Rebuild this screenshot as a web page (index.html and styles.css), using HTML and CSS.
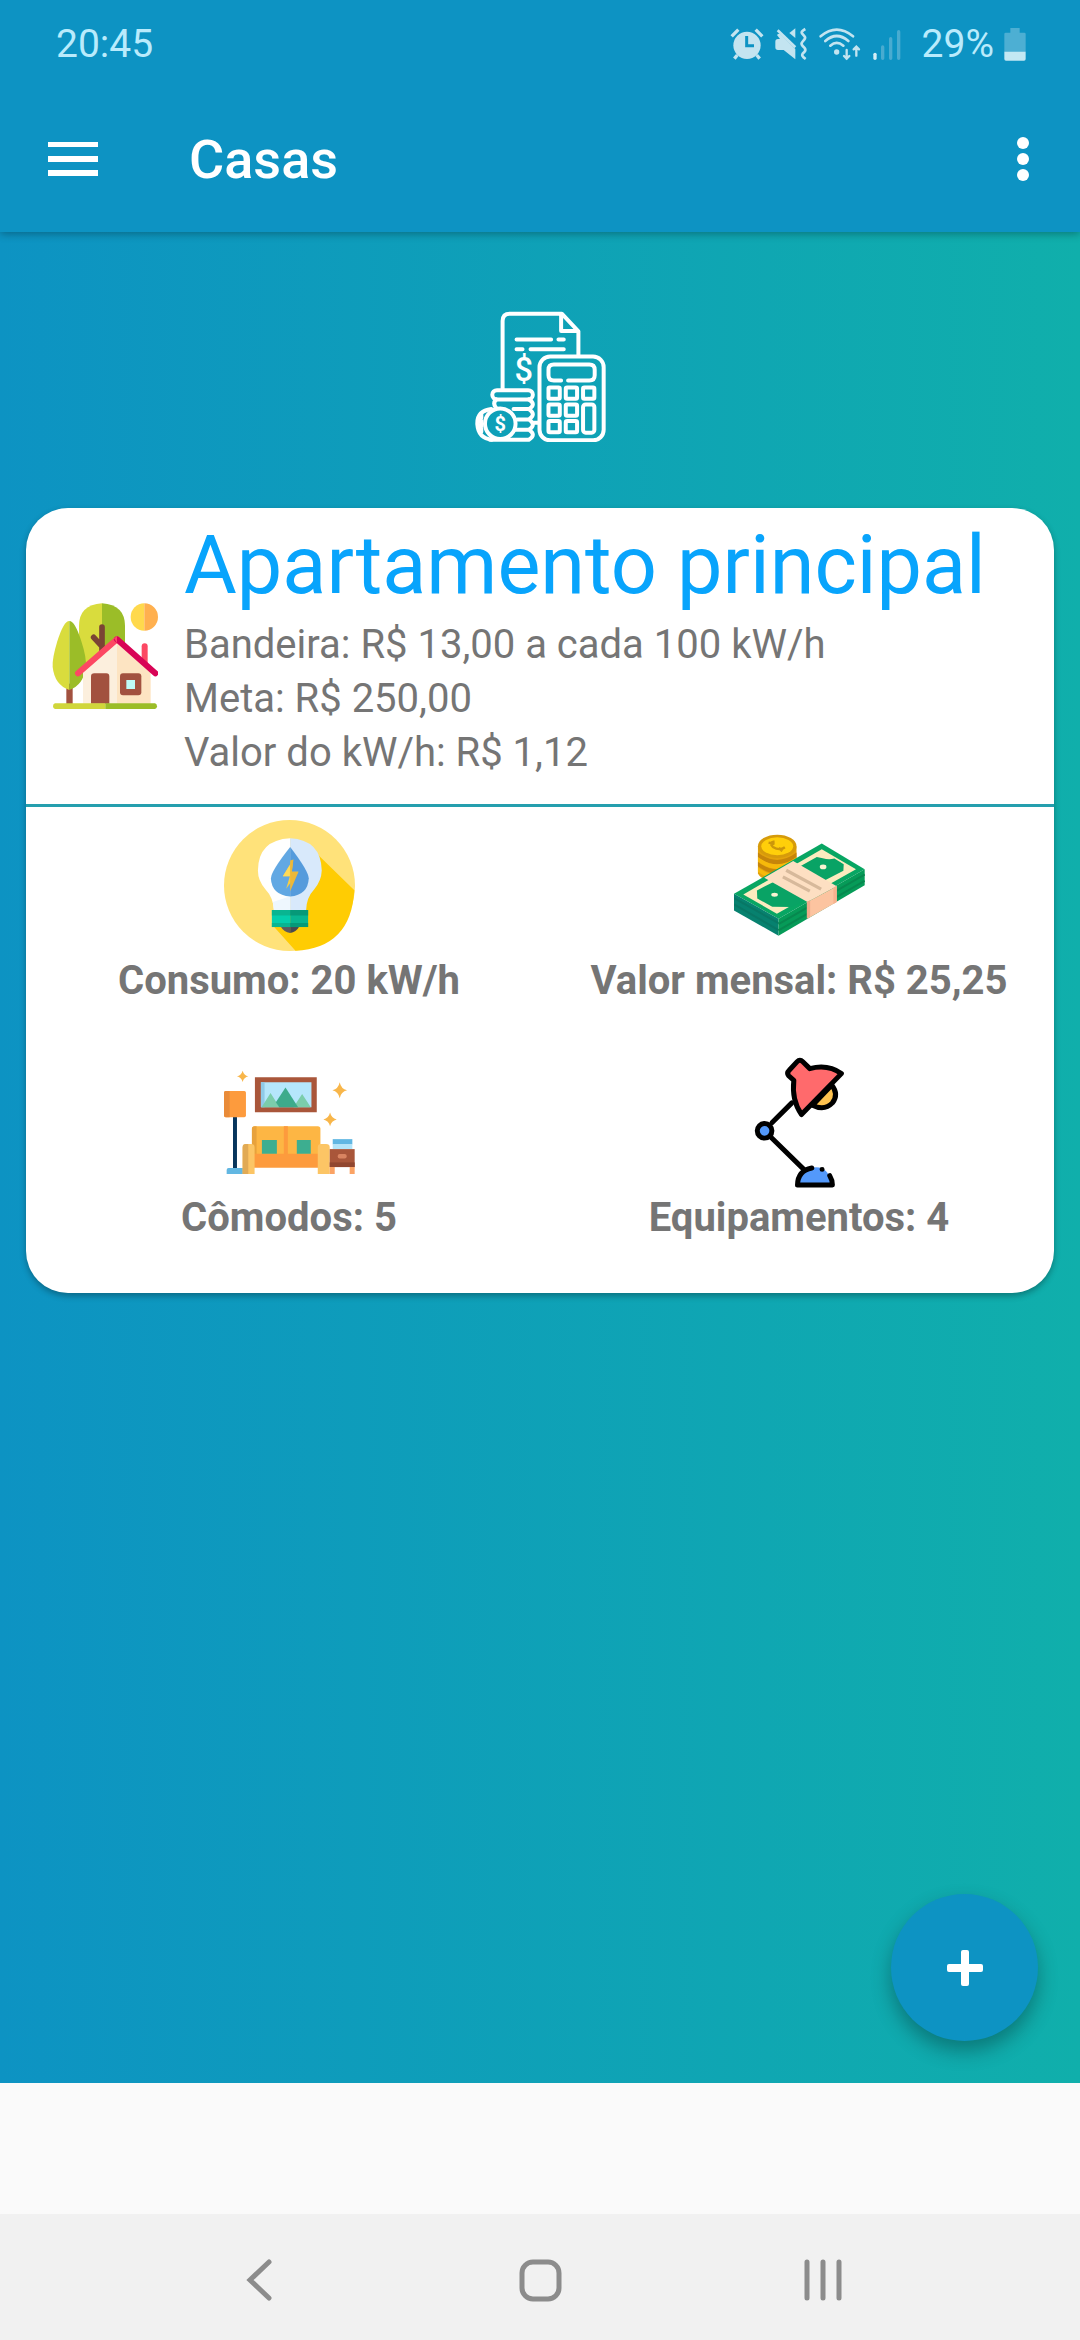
FILE: index.html
```html
<!DOCTYPE html>
<html lang="pt-BR">
<head>
    <meta charset="UTF-8">
    <meta name="viewport" content="width=device-width, initial-scale=1.0">
    <title>Casas</title>
    <link rel="stylesheet" href="styles.css">
</head>
<body>
    <header class="top">
        <div class="status-bar">
            <span class="clock">20:45</span>
            <div class="status-icons">
                <!-- Alarm -->
                <svg width="34" height="34" viewBox="84 76 102 102" aria-hidden="true">
                    <g fill="none" stroke="#c3e4f0" stroke-width="10">
                        <path d="M89 104l20-20M161 84l20 20"/>
                        <path d="M106 160l-9 11M164 160l9 11"/>
                    </g>
                    <circle cx="135" cy="131" r="41" fill="#c3e4f0"/>
                    <path d="M134 103v29h22" fill="none" stroke="#0d93c3" stroke-width="9"/>
                </svg>
                <!-- Sound off, vibrate -->
                <svg width="34" height="34" viewBox="218 76 102 102" aria-hidden="true">
                    <path d="M222 120q0-8 8-8h6l-9-12q6-8 13 0l42 42v31l-35-28h-17q-8 0-8-8z" fill="#c3e4f0"/>
                    <path d="M282 80v29l-18-15z" fill="#c3e4f0"/>
                    <path d="M229 86l53 51" stroke="#c3e4f0" stroke-width="8" fill="none"/>
                    <path d="M312 82q-14 8-10 13l7 8q5 6-1 12l-5 6q-5 6 1 12l5 5q6 7 0 13l-5 5q-5 7 9 16" fill="none" stroke="#c3e4f0" stroke-width="8"/>
                </svg>
                <!-- Wifi -->
                <svg width="44" height="34" viewBox="350 76 132 102" aria-hidden="true">
                    <g fill="none" stroke="#c3e4f0" stroke-width="8" stroke-linecap="round">
                        <path d="M358 104q48-40 97 0M372 118q34-30 69 0M387 132q19-17 39 0"/>
                        <path d="M436 145v26M428 163l8 8 8-8M465 162v-26M457 143l8-8 8 8" stroke-width="7"/>
                    </g>
                    <circle cx="406" cy="151" r="8" fill="#c3e4f0"/>
                </svg>
                <!-- Signal -->
                <svg width="30" height="34" viewBox="509 76 90 102" aria-hidden="true">
                    <g stroke="#49abd0" stroke-width="10" stroke-linecap="round">
                        <path d="M541 136v34M565 111v59M589 90v80"/>
                        <path d="M518 158v12" stroke="#d5eef6"/>
                    </g>
                </svg>
                <span class="battery-level">29%</span>
                <svg width="22" height="34" viewBox="911 76 66 102" aria-hidden="true">
                    <path d="M930 79h28v14h14q4 0 4 4v54h-64V97q0-4 4-4h14z" fill="#4dafd3"/>
                    <path d="M912 150h64v22q0 5-5 5h-54q-5 0-5-5z" fill="#c3e8f3"/>
                </svg>
            </div>
        </div>
        <div class="app-bar">
            <button class="icon-btn" type="button" aria-label="Abrir menu">
                <svg width="50" height="34" viewBox="0 0 50 34" fill="#fff" aria-hidden="true">
                    <path d="M0 0h50v5H0zM0 14h50v6H0zM0 28h50v6H0z"/>
                </svg>
            </button>
            <h1>Casas</h1>
            <button class="icon-btn" type="button" aria-label="Mais opções">
                <svg width="12" height="44" viewBox="0 0 12 44" fill="#fff" aria-hidden="true">
                    <circle cx="6" cy="6" r="6"/>
                    <circle cx="6" cy="22" r="6"/>
                    <circle cx="6" cy="38" r="6"/>
                </svg>
            </button>
        </div>
    </header>

    <main class="content">
        <!-- Bill and calculator -->
        <svg class="logo" viewBox="43 46 394 394" aria-hidden="true">
            <g fill="none" stroke="#fff" stroke-width="12" stroke-linecap="round" stroke-linejoin="round">
                <path d="M126 281V76q0-22 22-22h156l50 53v71M302 56v50h50"/>
                <path d="M168 132h104M294 132h16M168 161h18M210 161h100"/>
                <rect x="237" y="183" width="193" height="252" rx="32"/>
                <path d="M302 255h-22q-16 0-16-16v-16q0-16 16-16h107q16 0 16 16v16q0 16-16 16h-64"/>
                <rect x="264" y="276" width="34" height="34" rx="4"/>
                <rect x="316" y="276" width="34" height="34" rx="4"/>
                <rect x="368" y="276" width="34" height="34" rx="4"/>
                <rect x="264" y="327" width="34" height="34" rx="4"/>
                <rect x="316" y="327" width="34" height="34" rx="4"/>
                <rect x="264" y="377" width="34" height="34" rx="4"/>
                <rect x="316" y="377" width="34" height="34" rx="4"/>
                <rect x="368" y="327" width="34" height="85" rx="8"/>
                <rect x="95" y="284" width="122" height="28" rx="14"/>
                <path d="M107 312q-12 11-1 25M205 312q24 14 0 29h-46M205 341q24 16 0 31h-34M205 372q24 16 0 31h-42M205 403q24 16 0 30H88M220 382h14"/>
                <circle cx="119" cy="385" r="46"/>
                <path d="M92 341q-44 6-42 46 3 42 44 46M62 357v10M62 376v16M62 400v10"/>
            </g>
            <g class="money-sign" fill="#fff">
                <text x="190" y="258" font-size="98" font-weight="500">$</text>
                <text x="119" y="407" font-size="60" font-weight="700">$</text>
            </g>
        </svg>

        <article class="card">
            <div class="card-header">
                <!-- House -->
                <svg class="house" viewBox="36 38 318 318" aria-hidden="true">
                    <path d="M186 39q-69 5-69 68v130h69z" fill="#d9dc3d"/>
                    <path d="M186 39q69 5 69 68v130h-69z" fill="#9bbd28"/>
                    <path d="M186 110v80M186 168l-25-27" stroke="#7a4434" stroke-width="17" stroke-linecap="round" fill="none"/>
                    <path d="M79 280h19v62H79z" fill="#a2513f"/>
                    <path d="M88 92q-17 0-36 61-16 52-14 77 6 54 50 69z" fill="#d9dc3d"/>
                    <path d="M88 92q17 0 36 61 17 52 13 77-6 54-49 69z" fill="#9bbd28"/>
                    <path d="M313 39a41 41 0 0 0 0 82z" fill="#ffd94d"/>
                    <path d="M313 39a41 41 0 0 1 0 82z" fill="#ffb04f"/>
                    <path d="M314 168v54" stroke="#fc4863" stroke-width="18" stroke-linecap="round"/>
                    <path d="M129 245L231 153v187H129z" fill="#fcefdd"/>
                    <path d="M231 153l101 92v95H231z" fill="#fde4c2"/>
                    <path d="M114 249l117-102" stroke="#fc4863" stroke-width="18" stroke-linecap="round"/>
                    <path d="M346 249L231 147" stroke="#d80456" stroke-width="18" stroke-linecap="round"/>
                    <path d="M222 144l9-7v21z" fill="#fc4863"/>
                    <path d="M153 340v-81q0-10 10-10h36q9 0 9 10v81z" fill="#a2513f"/>
                    <rect x="240" y="249" width="64" height="66" rx="9" fill="#a2513f"/>
                    <path d="M259 269h26v27h-26z" fill="#befaf6"/>
                    <path d="M196 339H45a9 9 0 0 0 0 17h151z" fill="#d0d63b"/>
                    <path d="M196 339h149a9 9 0 0 1 0 17H196z" fill="#9bbd28"/>
                </svg>
                <div class="card-info">
                    <h2>Apartamento principal</h2>
                    <p>Bandeira: R$ 13,00 a cada 100 kW/h</p>
                    <p>Meta: R$ 250,00</p>
                    <p>Valor do kW/h: R$ 1,12</p>
                </div>
            </div>
            <div class="stats">
                <div class="stat">
                    <!-- Light bulb -->
                    <svg viewBox="39 29 394 394" aria-hidden="true">
                        <circle cx="236" cy="226" r="197" fill="#ffe27a"/>
                        <path d="M320 132l111 108q-10 174-177 182l-64-71 80-60z" fill="#ffcc03"/>
                        <path d="M238 84q-96 5-97 97 0 31 23 57 23 24 25 62h49z" fill="#fff"/>
                        <path d="M238 84q93 5 95 97-1 31-23 57-23 24-24 62h-48z" fill="#d8e9fb"/>
                        <path d="M186 276l3 24h49v-42z" fill="#eef7fe"/>
                        <path d="M238 110q-58 73-58 95 3 50 58 54z" fill="#62a8e3"/>
                        <path d="M238 110q56 73 56 95-3 50-56 54z" fill="#559bdc"/>
                        <path d="M247 148l-31 50h21l-11 38 37-51h-20z" fill="#facd42"/>
                        <path d="M238 151v92l25-58h-20l5-37z" fill="#edb838"/>
                        <path d="M247 148l-31 50h21v-34z" fill="#ffda57"/>
                        <path d="M210 350h28v19q-19-3-28-19z" fill="#5d5b5e"/>
                        <path d="M238 350h27q-9 16-27 19z" fill="#484950"/>
                        <path d="M183 300h55v51h-55z" fill="#04cfac"/>
                        <path d="M238 300h54v51h-54z" fill="#09b590"/>
                        <path d="M183 300h55v16h-55zM183 339h55v12h-55z" fill="#09b591"/>
                        <path d="M238 300h54v16h-54zM238 339h54v12h-54z" fill="#079978"/>
                    </svg>
                    <p>Consumo: 20 kW/h</p>
                </div>
                <div class="stat">
                    <!-- Banknotes and coins -->
                    <svg viewBox="39 0 394 394" aria-hidden="true">
                        <path d="M111 80v80q8 22 58 24 50-3 58-24V80z" fill="#e3a20c"/>
                        <path d="M111 98q58 44 116 0v14q-58 44-116 0zM111 126q58 44 116 0v13q-58 44-116 0z" fill="#c6850a"/>
                        <path d="M111 111q58 44 116 0v14q-58 44-116 0zM111 142q58 44 116 0v14q-58 44-116 0z" fill="#f6b90b"/>
                        <ellipse cx="169" cy="79" rx="58" ry="35" fill="#d69b0b"/>
                        <ellipse cx="169" cy="79" rx="48" ry="27" fill="#ffcf0a"/>
                        <path d="M161 64q-19 3-5 17 20 13 36 1M143 68l18 4M174 84l10 10" fill="none" stroke="#cb960b" stroke-width="7"/>
                        <path d="M39 222L303 71l129 77-259 149z" fill="#08a663"/>
                        <path d="M39 222l134 75v51L39 272z" fill="#07816f"/>
                        <path d="M39 235l134 75M39 254l134 77" stroke="#087765" stroke-width="6"/>
                        <path d="M173 297l259-149v48L173 348z" fill="#069b58"/>
                        <path d="M173 313l259-149M173 332l259-149" stroke="#07884f" stroke-width="6"/>
                        <path d="M67 224L303 88l103 60-238 134z" fill="#fbebbf"/>
                        <path d="M108 212l54-28 94 55-44 23-58-1-45-25z" fill="#09a365"/>
                        <path d="M237 140l51-29 18 4q18 6 35 1l28 17-1 20-64 33-75-38z" fill="#09a365"/>
                        <ellipse cx="161" cy="225" rx="10" ry="6" fill="#f9f3d2"/>
                        <ellipse cx="307" cy="141" rx="10" ry="7" fill="#f9f3d2"/>
                        <path d="M130 174l87-51 131 76-88 48z" fill="#fddfc2"/>
                        <path d="M260 247l88-48v48l-88 50z" fill="#fcc4a0"/>
                        <path d="M258 246l10-5v49l-10 7z" fill="#f1aa8a"/>
                        <path d="M338 204l10-6v49l-10 6z" fill="#f7b28f"/>
                        <path d="M196 151l105 57M186 171l81 43" stroke="#d7b99b" stroke-width="10"/>
                    </svg>
                    <p>Valor mensal: R$ 25,25</p>
                </div>
                <div class="stat">
                    <!-- Living room -->
                    <svg viewBox="39 20 394 394" aria-hidden="true">
                        <path d="M66 198h12v160H66z" fill="#07355c"/>
                        <rect x="39" y="122" width="66" height="79" rx="5" fill="#fd9b3d"/>
                        <path d="M44 122h12v79H44q-5 0-5-5v-69q0-5 5-5z" fill="#e98b39"/>
                        <path d="M47 372v-12q0-6 6-6h50v18z" fill="#62b7e2"/>
                        <path d="M132 81h186v105H132z" fill="#a9563a"/>
                        <path d="M150 96h152v75H150z" fill="#b5e6fb"/>
                        <path d="M150 96h11v75h-11z" fill="#8fcae8"/>
                        <path d="M152 171l27-43 27 43zM248 171l26-40 26 40z" fill="#7bcdab"/>
                        <path d="M195 156l29-44 38 59h-57z" fill="#3dab8b"/>
                        <g fill="#f8b64a">
                            <path d="M95 61q4 14 17 17-13 3-17 17-4-14-17-17 13-3 17-17z"/>
                            <path d="M387 96q4 20 22 24-18 4-22 24-4-20-22-24 18-4 22-24z"/>
                            <path d="M358 187q4 17 20 21-16 4-20 20-4-16-20-20 16-4 20-21z"/>
                        </g>
                        <rect x="123" y="228" width="206" height="100" rx="8" fill="#fdb644"/>
                        <path d="M131 228h6v84h-14v-76q0-8 8-8z" fill="#e8a23c"/>
                        <path d="M219 228h12v84h-12z" fill="#fd9b3d"/>
                        <path d="M123 311h208v42H123z" fill="#fd9b3d"/>
                        <path d="M153 270h45v41h-45zM258 270h42v41h-42z" fill="#3dae90"/>
                        <path d="M95 372v-80q0-10 10-10h15q11 0 11 10v80zM321 372v-80q0-10 10-10h15q11 0 11 10v80z" fill="#fcc565"/>
                        <path d="M95 372v-80q0-10 10-10h7v90z" fill="#e1aa55"/>
                        <path d="M366 267h59v16h-59z" fill="#61b7e3"/>
                        <path d="M366 283h59v14h-59z" fill="#b3e5fa"/>
                        <path d="M357 297h75v54h-75z" fill="#a9563a"/>
                        <path d="M357 337h75v14h-75z" fill="#91462f"/>
                        <rect x="381" y="312" width="27" height="13" rx="6" fill="#d98461"/>
                        <path d="M357 351h15v21h-15zM417 351h15v21h-15z" fill="#fba365"/>
                    </svg>
                    <p>Cômodos: 5</p>
                </div>
                <div class="stat">
                    <!-- Desk lamp -->
                    <svg viewBox="-20 20 394 394" aria-hidden="true">
                        <g stroke="#000" stroke-width="15" stroke-linecap="round" stroke-linejoin="round" fill="none">
                            <path d="M154 158l-60 60M92 262l98 96"/>
                            <path d="M274 104q22 28 2 54-24 25-60 7z" fill="#ffc34f"/>
                            <path d="M183 193q-30-43-23-103l-16-14q-6-8 2-16l24-26q8-9 17 0l21 21q55-14 95 15z" fill="#ff6a6c"/>
                            <circle cx="72" cy="242" r="22" fill="#5399fb"/>
                            <path d="M171 405q2-40 38-51 54-14 67 51z" fill="#5399fb" stroke="none"/>
                            <path d="M214 354q-42 8-43 51h105q0-15-8-28M245 358h0"/>
                        </g>
                    </svg>
                    <p>Equipamentos: 4</p>
                </div>
            </div>
        </article>

        <button class="fab" type="button" aria-label="Adicionar casa">
            <svg width="36" height="36" viewBox="0 0 36 36" fill="#fff" aria-hidden="true">
                <rect x="14" y="0" width="8" height="36" rx="2"/>
                <rect x="0" y="14" width="36" height="8" rx="2"/>
            </svg>
        </button>
    </main>

    <div class="footer-space"></div>

    <nav class="nav-bar" aria-label="Sistema">
        <button class="icon-btn" type="button" aria-label="Voltar">
            <svg width="48" height="48" viewBox="0 0 48 48" aria-hidden="true">
                <path d="M35 6L16 24l19 18"/>
            </svg>
        </button>
        <button class="icon-btn" type="button" aria-label="Início">
            <svg width="48" height="48" viewBox="0 0 48 48" aria-hidden="true">
                <rect x="6" y="6" width="37" height="37" rx="11"/>
            </svg>
        </button>
        <button class="icon-btn" type="button" aria-label="Recentes">
            <svg width="48" height="48" viewBox="0 0 48 48" aria-hidden="true">
                <path d="M9 6v36M25 6v36M41 6v36"/>
            </svg>
        </button>
    </nav>
</body>
</html>
```
FILE: styles.css
```css
:root {
    --primary: #0d93c3;
    --secondary: #10afab;
    --title: #08a4fc;
    --text: #757575;
    --status: #b9ebfc;
}

* {
    margin: 0;
    padding: 0;
    box-sizing: border-box;
}

body {
    display: flex;
    flex-direction: column;
    min-height: 100vh;
    background: #fafafa;
    color: var(--text);
    font-family: Roboto, sans-serif;
    font-size: 40px;
}

svg {
    display: block;
    flex-shrink: 0;
}

.icon-btn {
    border: none;
    background: none;
    cursor: pointer;
}

/* Top bars */
.top {
    position: relative;
    z-index: 1;
    background: var(--primary);
    box-shadow: 0 2px 8px rgba(0, 0, 0, 0.3);
}

.status-bar {
    display: flex;
    justify-content: space-between;
    align-items: center;
    height: 85px;
    padding: 2px 54px 0 56px;
    color: var(--status);
    font-size: 39px;
}

.status-icons {
    display: flex;
    align-items: center;
    gap: 10px;
}

.battery-level {
    margin-left: 10px;
}

.app-bar {
    display: flex;
    align-items: center;
    height: 147px;
    padding: 0 51px 0 48px;
}

h1 {
    flex: 1;
    margin-left: 91px;
    padding-top: 2px;
    color: #fff;
    font-size: 54px;
    font-weight: 500;
}

/* Content */
.content {
    position: relative;
    flex: 1;
    padding: 79px 26px;
    background: linear-gradient(to right, var(--primary), var(--secondary));
}

.logo {
    width: 131px;
    margin: 0 auto 66px;
}

.money-sign {
    font-family: Roboto, sans-serif;
    text-anchor: middle;
}

.card {
    background: #fff;
    border-radius: 42px;
    box-shadow: 0 3px 6px rgba(0, 0, 0, 0.3);
}

.card-header {
    display: flex;
    align-items: center;
    gap: 26px;
    padding: 0 26px;
    border-bottom: 3px solid #259fae;
}

.house {
    width: 106px;
}

.card-info {
    padding: 6px 0 24px;
    line-height: 54px;
}

h2 {
    color: var(--title);
    font-size: 81px;
    font-weight: 400;
    line-height: 104px;
}

.stats {
    display: grid;
    grid-template-columns: 1fr 1fr;
    row-gap: 46px;
    padding: 13px 0 45px 8px;
    font-weight: 700;
    line-height: 60px;
    text-align: center;
}

.stat svg {
    width: 131px;
    margin: 0 auto;
}

.fab {
    position: absolute;
    right: 42px;
    bottom: 42px;
    display: flex;
    justify-content: center;
    align-items: center;
    width: 147px;
    height: 147px;
    border: none;
    border-radius: 50%;
    background: var(--primary);
    box-shadow: 0 10px 20px rgba(0, 0, 0, 0.3);
    cursor: pointer;
}

/* Bottom */
.footer-space {
    height: 131px;
}

.nav-bar {
    display: flex;
    justify-content: space-evenly;
    align-items: center;
    height: 126px;
    padding-top: 6px;
    background: #f1f1f1;
}

.nav-bar svg {
    fill: none;
    stroke: #8c8c8c;
    stroke-width: 5;
    stroke-linecap: round;
}
```
